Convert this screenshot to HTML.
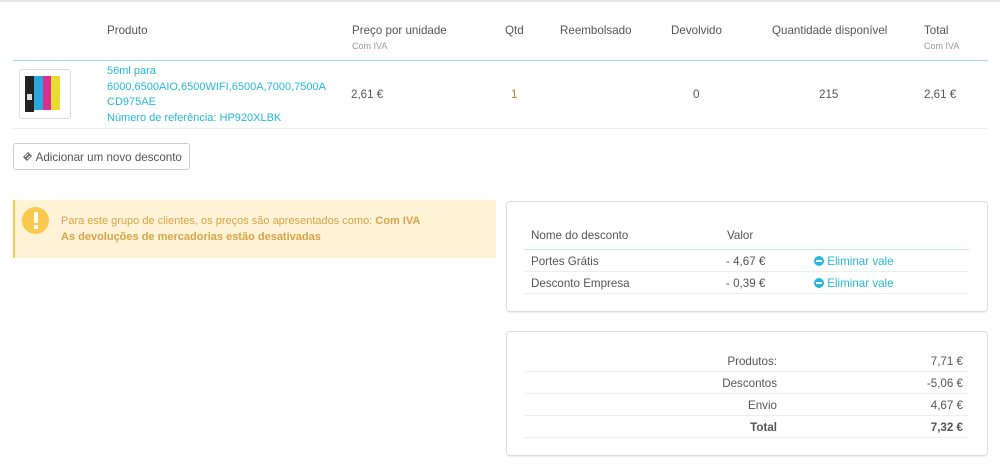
<!DOCTYPE html>
<html><head><meta charset="utf-8"><style>
*{margin:0;padding:0;box-sizing:border-box}
body{width:1000px;height:466px;background:#fff;font-family:"Liberation Sans",sans-serif;font-size:11.6px;color:#555;position:relative;overflow:hidden}
.a{position:absolute;white-space:nowrap}
.s{font-size:9px;color:#999}
.b{color:#25b9d7}
.hl{position:absolute;height:1px}
.r{text-align:right}
.ic{display:inline-block;width:10px;height:10px;border-radius:50%;background:#25b9d7;vertical-align:-1px;position:relative}
.ic i{position:absolute;left:2px;top:4px;width:6px;height:2px;background:#fff}
</style></head><body>
<div class="hl" style="left:0;top:0;width:1000px;height:2px;background:#e6e6e6"></div>
<div class="a" style="left:107px;top:24px">Produto</div>
<div class="a" style="left:352px;top:24px">Preço por unidade</div>
<div class="a s" style="left:352px;top:41px">Com IVA</div>
<div class="a" style="left:505px;top:24px">Qtd</div>
<div class="a" style="left:560px;top:24px">Reembolsado</div>
<div class="a" style="left:671px;top:24px">Devolvido</div>
<div class="a" style="left:772px;top:24px">Quantidade disponível</div>
<div class="a" style="left:924px;top:24px">Total</div>
<div class="a s" style="left:924px;top:41px">Com IVA</div>
<div class="hl" style="left:13px;top:60px;width:975px;background:#a7d8ef"></div>

<div class="a" style="left:19px;top:69px;width:52px;height:50px;border:1px solid #ddd;border-radius:3px;background:#fff">
<svg width="50" height="48" viewBox="0 0 50 48"><rect x="5" y="6" width="9" height="36" fill="#222"/><rect x="14" y="6" width="9" height="34" fill="#2aa6de"/><rect x="23" y="6" width="8" height="34" fill="#d9308f"/><rect x="31" y="6" width="9" height="34" fill="#e8dc30"/><rect x="7" y="24" width="5" height="6" fill="#ddd"/></svg></div>
<div class="a b" style="left:107px;top:64px;line-height:15.5px;font-size:11px">56ml para<br>6000,6500AIO,6500WIFI,6500A,7000,7500A<br>CD975AE<br>Número de referência: HP920XLBK</div>
<div class="a" style="left:351px;top:88px">2,61 €</div>
<div class="a" style="left:511px;top:88px;color:#c07d2d">1</div>
<div class="a" style="left:693px;top:88px">0</div>
<div class="a" style="left:819px;top:88px">215</div>
<div class="a" style="left:924px;top:88px">2,61 €</div>
<div class="hl" style="left:13px;top:128px;width:975px;background:#eee"></div>

<div class="a" style="left:13px;top:143px;width:177px;height:27px;border:1px solid #ccc;border-radius:3px;padding:7px 0 0 8px;color:#555"><svg width="11" height="11" viewBox="0 0 11 11" style="vertical-align:-1px"><path d="M1 6 L6 1 L10 5 L5 10 Z" fill="#666"/><path d="M3 6 L6 3 M5 8 L8 5" stroke="#fff" stroke-width="1"/></svg> Adicionar um novo desconto</div>

<div class="a" style="left:13px;top:200px;width:483px;height:58px;background:#fff3d7;border-left:2px solid #fcc94f"></div>
<div class="a" style="left:22px;top:207px;width:27px;height:27px;border-radius:50%;background:#fcc94f"><div style="position:absolute;left:11.5px;top:5px;width:4px;height:11px;background:#fff;border-radius:1px"></div><div style="position:absolute;left:11.5px;top:18px;width:4px;height:4px;background:#fff"></div></div>
<div class="a" style="left:61px;top:215px;color:#d8a448;font-size:11px">Para este grupo de clientes, os preços são apresentados como: <b>Com IVA</b></div>
<div class="a" style="left:61px;top:231px;color:#d8a448;font-weight:bold;font-size:11px">As devoluções de mercadorias estão desativadas</div>

<div class="a" style="left:506px;top:201px;width:482px;height:111px;border:1px solid #ddd;border-radius:4px;box-shadow:0 1px 1px #eee"></div>
<div class="a" style="left:531px;top:229px">Nome do desconto</div>
<div class="a" style="left:727px;top:229px">Valor</div>
<div class="hl" style="left:524px;top:249px;width:445px;background:#bfe3f4"></div>
<div class="a" style="left:531px;top:255px">Portes Grátis</div>
<div class="a" style="left:726px;top:255px">- 4,67 €</div>
<div class="a b" style="left:814px;top:255px"><span class="ic"><i></i></span> Eliminar vale</div>
<div class="hl" style="left:524px;top:271px;width:445px;background:#eee"></div>
<div class="a" style="left:531px;top:277px">Desconto Empresa</div>
<div class="a" style="left:726px;top:277px">- 0,39 €</div>
<div class="a b" style="left:814px;top:277px"><span class="ic"><i></i></span> Eliminar vale</div>
<div class="hl" style="left:524px;top:293px;width:445px;background:#eee"></div>

<div class="a" style="left:506px;top:331px;width:482px;height:125px;border:1px solid #ddd;border-radius:4px;box-shadow:0 1px 1px #eee"></div>
<div class="a r" style="left:600px;width:177px;top:355px">Produtos:</div>
<div class="a r" style="left:860px;width:103px;top:355px">7,71 €</div>
<div class="hl" style="left:524px;top:371px;width:445px;background:#eee"></div>
<div class="a r" style="left:600px;width:177px;top:377px">Descontos</div>
<div class="a r" style="left:860px;width:103px;top:377px">-5,06 €</div>
<div class="hl" style="left:524px;top:393px;width:445px;background:#eee"></div>
<div class="a r" style="left:600px;width:177px;top:399px">Envio</div>
<div class="a r" style="left:860px;width:103px;top:399px">4,67 €</div>
<div class="hl" style="left:524px;top:415px;width:445px;background:#eee"></div>
<div class="a r" style="left:600px;width:177px;top:421px;font-weight:bold">Total</div>
<div class="a r" style="left:860px;width:103px;top:421px;font-weight:bold">7,32 €</div>
<div class="hl" style="left:524px;top:437px;width:445px;background:#eee"></div>
</body></html>
